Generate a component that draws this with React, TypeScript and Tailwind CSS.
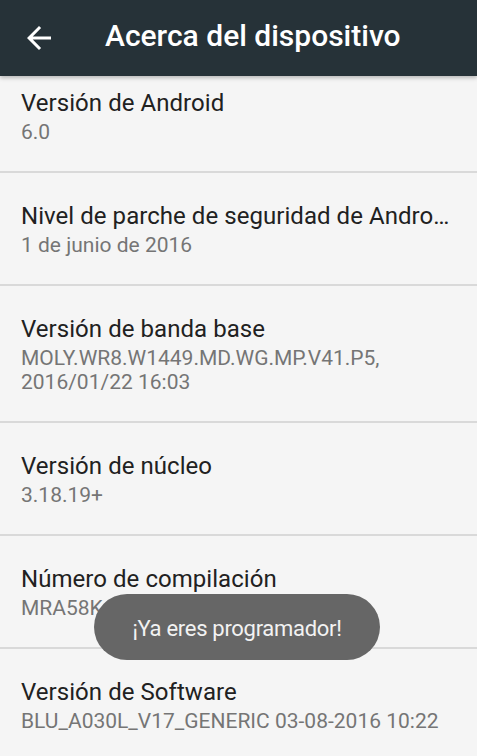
const items = [
  { title: 'Versión de Android', lines: ['6.0'] },
  { title: 'Nivel de parche de seguridad de Android', lines: ['1 de junio de 2016'] },
  { title: 'Versión de banda base', lines: ['MOLY.WR8.W1449.MD.WG.MP.V41.P5,', '2016/01/22 16:03'] },
  { title: 'Versión de núcleo', lines: ['3.18.19+'] },
  { title: 'Número de compilación', lines: ['MRA58K release-keys'] },
  { title: 'Versión de Software', lines: ['BLU_A030L_V17_GENERIC 03-08-2016 10:22'] },
]

function BackArrow() {
  return (
    <svg width="36" height="36" viewBox="0 0 24 24" fill="#ffffff">
      <path d="M20 11H7.83l5.59-5.59L12 4l-8 8 8 8 1.41-1.41L7.83 13H20v-2z" />
    </svg>
  )
}

export default function App() {
  return (
    <div
      className="relative w-[477px] h-[756px] overflow-hidden bg-[#f5f5f5] flex flex-col"
      style={{ fontFamily: 'Roboto, "Noto Sans", sans-serif' }}
    >
      <header className="relative z-10 h-[76px] shrink-0 bg-[#263238] flex items-center shadow-[0_2px_4px_rgba(0,0,0,0.25)]">
        <div className="pl-[21px] pr-[48px] flex items-center">
          <BackArrow />
        </div>
        <h1 className="text-white text-[30px] font-medium leading-none -mt-[4px]">Acerca del dispositivo</h1>
      </header>

      <div className="flex-1 overflow-hidden">
        <div className="-mt-[16px]">
          {items.map((item, i) => (
            <div
              key={item.title}
              className={`pl-[21px] pr-[26px] pt-[26px] pb-[27px] ${i < items.length - 1 ? 'border-b-[2px] border-[#d9d9d9]' : ''}`}
            >
              <div className="text-[24px] leading-[34px] text-[#212121] truncate tracking-[0.05px]">{item.title}</div>
              {item.lines.map((l) => (
                <div key={l} className="text-[21px] leading-[24px] text-[#757575] whitespace-nowrap">
                  {l}
                </div>
              ))}
            </div>
          ))}
        </div>
      </div>

      <div className="absolute left-[94px] top-[594px] w-[286px] h-[66px] rounded-full bg-[#666666] flex items-center justify-center">
        <span className="text-[#f2f2f2] text-[22px] tracking-[-0.3px] mt-[3px]">¡Ya eres programador!</span>
      </div>
    </div>
  )
}
